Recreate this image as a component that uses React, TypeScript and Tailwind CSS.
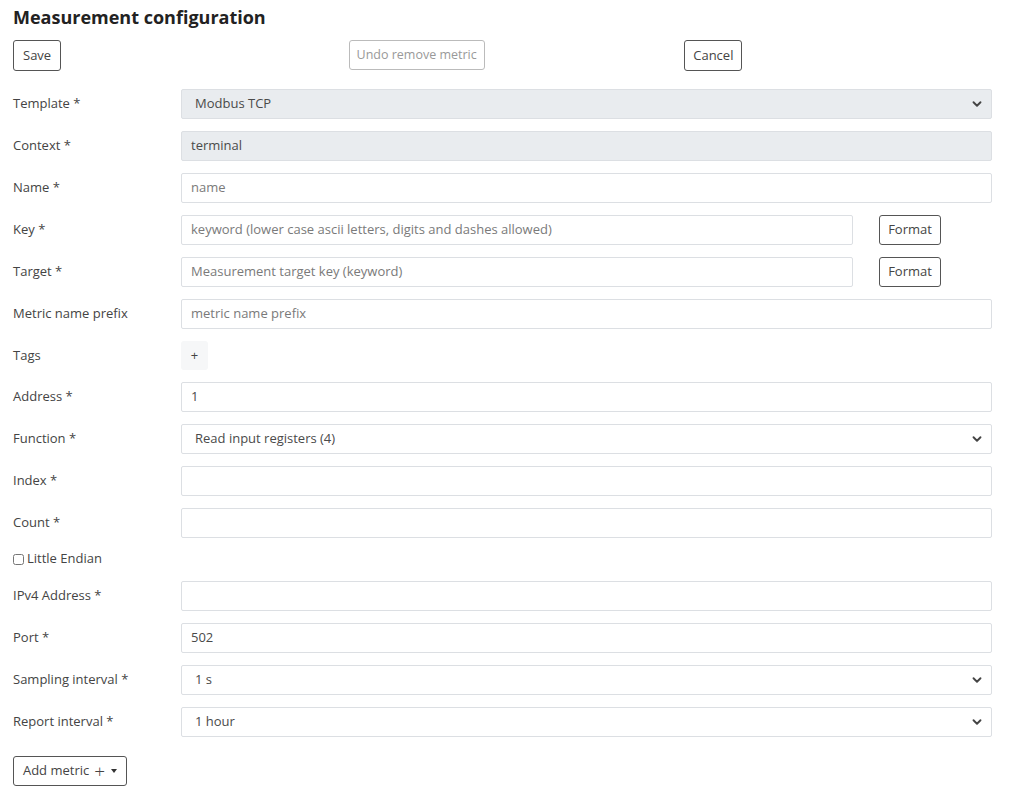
import { ChevronDown } from "lucide-react";

type Row =
  | { kind: "input"; label: string; value?: string; placeholder?: string; disabled?: boolean; format?: boolean }
  | { kind: "select"; label: string; value: string; disabled?: boolean }
  | { kind: "tags"; label: string };

const rowsTop: Row[] = [
  { kind: "select", label: "Template *", value: "Modbus TCP", disabled: true },
  { kind: "input", label: "Context *", value: "terminal", disabled: true },
  { kind: "input", label: "Name *", placeholder: "name" },
  { kind: "input", label: "Key *", placeholder: "keyword (lower case ascii letters, digits and dashes allowed)", format: true },
  { kind: "input", label: "Target *", placeholder: "Measurement target key (keyword)", format: true },
  { kind: "input", label: "Metric name prefix", placeholder: "metric name prefix" },
  { kind: "tags", label: "Tags" },
  { kind: "input", label: "Address *", value: "1" },
  { kind: "select", label: "Function *", value: "Read input registers (4)" },
  { kind: "input", label: "Index *" },
  { kind: "input", label: "Count *" },
];

const rowsBottom: Row[] = [
  { kind: "input", label: "IPv4 Address *" },
  { kind: "input", label: "Port *", value: "502" },
  { kind: "select", label: "Sampling interval *", value: "1 s" },
  { kind: "select", label: "Report interval *", value: "1 hour" },
];

function Field({ row }: { row: Row }) {
  if (row.kind === "tags") {
    return (
      <button type="button" className="h-[29px] w-[27px] rounded-[3px] bg-[#f6f7f8] text-[13px] text-[#444]">
        +
      </button>
    );
  }

  if (row.kind === "select") {
    return (
      <div
        className={`flex h-[30px] flex-1 items-center justify-between rounded-[2px] border border-[#dcdfe3] pl-[13px] pr-[7px] text-[13px] text-[#4a4a4a] ${
          row.disabled ? "bg-[#e9ecef]" : "bg-white"
        }`}
      >
        <span>{row.value}</span>
        <ChevronDown className="h-[14px] w-[14px] text-[#444]" strokeWidth={3.2} aria-hidden />
      </div>
    );
  }

  return (
    <div className="flex flex-1 items-center">
      <div
        className={`flex h-[30px] flex-1 items-center rounded-[2px] border border-[#dcdfe3] px-[9px] text-[13px] ${
          row.disabled ? "bg-[#e9ecef]" : "bg-white"
        } ${row.value ? "text-[#4a4a4a]" : "text-[#7a7a7a]"}`}
      >
        {row.value ?? row.placeholder ?? ""}
      </div>
      {row.format ? (
        <div className="ml-[26px] flex w-[113px] shrink-0">
          <button
            type="button"
            className="h-[30px] w-[62px] rounded-[3px] border border-[#555] bg-white text-[13px] text-[#444]"
          >
            Format
          </button>
        </div>
      ) : null}
    </div>
  );
}

function FormRow({ row }: { row: Row }) {
  return (
    <div className="flex items-center">
      <div className="w-[168px] shrink-0 text-[13px] text-[#444]">{row.label}</div>
      <div className="flex flex-1">
        <Field row={row} />
      </div>
    </div>
  );
}

export default function App() {
  return (
    <div className="min-h-[798px] bg-white pl-[13px] pr-[32px] font-['Open_Sans',sans-serif] text-[#444]">
      <h1 className="pt-[5px] text-[18px] font-bold leading-[24px] text-[#222]">Measurement configuration</h1>

      <div className="mt-[11px] grid w-[1007px] grid-cols-3">
        <div>
          <button type="button" className="h-[31px] rounded-[3px] border border-[#555] px-[9px] text-[13px] text-[#444]">
            Save
          </button>
        </div>
        <div>
          <button
            type="button"
            className="h-[30px] w-[136px] rounded-[3px] border border-[#bbb] text-[12.5px] text-[#999]"
          >
            Undo remove metric
          </button>
        </div>
        <div>
          <button type="button" className="h-[31px] w-[58px] rounded-[3px] border border-[#555] text-[13px] text-[#444]">
            Cancel
          </button>
        </div>
      </div>

      <div className="mt-[18px] flex flex-col gap-[12px]">
        {rowsTop.map((row) => (
          <FormRow key={row.label} row={row} />
        ))}
      </div>

      <label className="mt-[11px] flex h-[20px] items-center text-[13px] text-[#444]">
        <input type="checkbox" className="mr-[3px] h-[11px] w-[11px]" />
        Little Endian
      </label>

      <div className="mt-[12px] flex flex-col gap-[12px]">
        {rowsBottom.map((row) => (
          <FormRow key={row.label} row={row} />
        ))}
      </div>

      <button
        type="button"
        className="mt-[19px] flex h-[30px] w-[114px] items-center justify-center rounded-[3px] border border-[#555] text-[13px] text-[#444]"
      >
        Add metric
        <span className="ml-[5px] text-[19px] font-light leading-none">+</span>
        <span className="ml-[6px] border-x-[3.5px] border-t-[4px] border-x-transparent border-t-[#333]" />
      </button>
    </div>
  );
}
